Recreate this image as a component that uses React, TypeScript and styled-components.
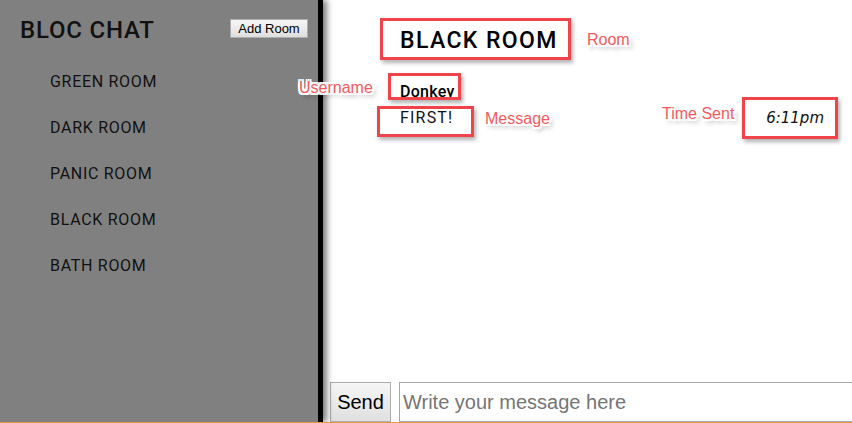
import styled, { createGlobalStyle } from "styled-components";

const rooms = ["GREEN ROOM", "DARK ROOM", "PANIC ROOM", "BLACK ROOM", "BATH ROOM"];

const notes = [
  { label: "Room", box: { x: 380, y: 18, w: 191, h: 42 }, at: { x: 587, y: 40 } },
  { label: "Username", box: { x: 388, y: 73, w: 73, h: 27 }, at: { x: 299, y: 88 } },
  { label: "Message", box: { x: 377, y: 106, w: 97, h: 31 }, at: { x: 485, y: 119 } },
  { label: "Time Sent", box: { x: 742, y: 97, w: 96, h: 42 }, at: { x: 662, y: 114 } },
];

export default function App() {
  return (
    <>
      <GlobalStyle />
      <Page>
        <Sidebar>
          <SidebarHeader>
            <Brand>BLOC CHAT</Brand>
            <AddButton type="button">Add Room</AddButton>
          </SidebarHeader>
          <RoomList>
            {rooms.map((room) => (
              <RoomItem key={room}>{room}</RoomItem>
            ))}
          </RoomList>
        </Sidebar>
        <Main>
          <RoomTitle>BLACK ROOM</RoomTitle>
          <MessageList>
            <Message>
              <Username>Donkey</Username>
              <MessageRow>
                <Content>FIRST!</Content>
                <SentAt>6:11pm</SentAt>
              </MessageRow>
            </Message>
          </MessageList>
          <Composer>
            <SendButton type="button">Send</SendButton>
            <MessageInput placeholder="Write your message here" />
          </Composer>
        </Main>
        {notes.map((n) => (
          <span key={n.label}>
            <NoteBox
              style={{ left: n.box.x, top: n.box.y, width: n.box.w, height: n.box.h }}
            />
            <NoteLabel style={{ left: n.at.x, top: n.at.y }}>{n.label}</NoteLabel>
          </span>
        ))}
      </Page>
    </>
  );
}

const GlobalStyle = createGlobalStyle`
  html, body {
    margin: 0;
    padding: 0;
    background: #fff;
  }
  * {
    box-sizing: border-box;
  }
`;

const Page = styled.div`
  position: relative;
  display: flex;
  height: 423px;
  overflow: hidden;
  border-bottom: 1px solid #e39a4f;
  font-family: Roboto, "Liberation Sans", sans-serif;
`;

const Sidebar = styled.aside`
  width: 323px;
  flex-shrink: 0;
  background: #808080;
  border-right: 5px solid #000;
  box-shadow: 4px 0 6px rgba(0, 0, 0, 0.5);
  z-index: 1;
  color: #111;
`;

const SidebarHeader = styled.div`
  display: flex;
  justify-content: space-between;
  align-items: flex-start;
  padding: 16px 10px 0 20px;
`;

const Brand = styled.h1`
  margin: 0;
  font-size: 24px;
  font-weight: 500;
  line-height: 28px;
  letter-spacing: 0.8px;
`;

const AddButton = styled.button`
  margin-top: 3px;
  width: 78px;
  height: 19px;
  padding: 0;
  font-family: "Liberation Sans", Arial, sans-serif;
  font-size: 13px;
  color: #000;
  background: linear-gradient(#f6f6f6, #dedede);
  border: 1px solid #adadad;
  border-radius: 0;
`;

const RoomList = styled.ul`
  list-style: none;
  margin: 0;
  padding: 26px 0 0 50px;
`;

const RoomItem = styled.li`
  height: 46px;
  line-height: 24px;
  font-size: 16px;
  letter-spacing: 0.7px;
`;

const Main = styled.main`
  flex: 1;
  display: flex;
  flex-direction: column;
  min-width: 0;
`;

const RoomTitle = styled.h2`
  margin: 28px 0 0 77px;
  font-size: 23px;
  font-weight: 500;
  line-height: 26px;
  letter-spacing: 1.4px;
  color: #000;
`;

const MessageList = styled.div`
  flex: 1;
  padding: 25px 28px 0 77px;
`;

const Message = styled.div`
  display: flex;
  flex-direction: column;
`;

const Username = styled.div`
  font-size: 16px;
  font-weight: 500;
  line-height: 26px;
  letter-spacing: 0.3px;
  color: #000;
`;

const MessageRow = styled.div`
  display: flex;
  justify-content: space-between;
  align-items: center;
`;

const Content = styled.div`
  font-size: 16px;
  line-height: 26px;
  letter-spacing: 1.2px;
  color: #111;
`;

const SentAt = styled.div`
  font-family: "DejaVu Sans", sans-serif;
  font-style: italic;
  font-size: 15px;
  color: #111;
`;

const Composer = styled.form`
  display: flex;
  gap: 8px;
  height: 40px;
  padding-left: 7px;
`;

const SendButton = styled.button`
  width: 61px;
  height: 40px;
  font-family: "Liberation Sans", Arial, sans-serif;
  font-size: 20px;
  color: #000;
  background: linear-gradient(#f6f6f6, #e0e0e0);
  border: 1px solid #adadad;
  border-radius: 0;
  padding: 0;
`;

const MessageInput = styled.input`
  flex: 1;
  height: 40px;
  margin-right: -4px;
  padding: 0 3px;
  font-family: "Liberation Sans", Arial, sans-serif;
  font-size: 20px;
  border: 1px solid #a9a9a9;
  outline: none;

  &::placeholder {
    color: #757575;
  }
`;

const NoteBox = styled.div`
  position: absolute;
  border: 3px solid #f0434a;
  box-shadow: 2px 3px 4px rgba(0, 0, 0, 0.3);
  z-index: 2;
`;

const NoteLabel = styled.div`
  position: absolute;
  transform: translateY(-50%);
  font-family: "Liberation Sans", Arial, sans-serif;
  font-size: 16px;
  line-height: 18px;
  color: #f35a60;
  white-space: nowrap;
  z-index: 2;
  text-shadow:
    -2px 0 #fff, 2px 0 #fff, 0 -2px #fff, 0 2px #fff,
    -2px -2px #fff, 2px 2px #fff, -2px 2px #fff, 2px -2px #fff,
    3px 4px 4px rgba(0, 0, 0, 0.35);
`;
